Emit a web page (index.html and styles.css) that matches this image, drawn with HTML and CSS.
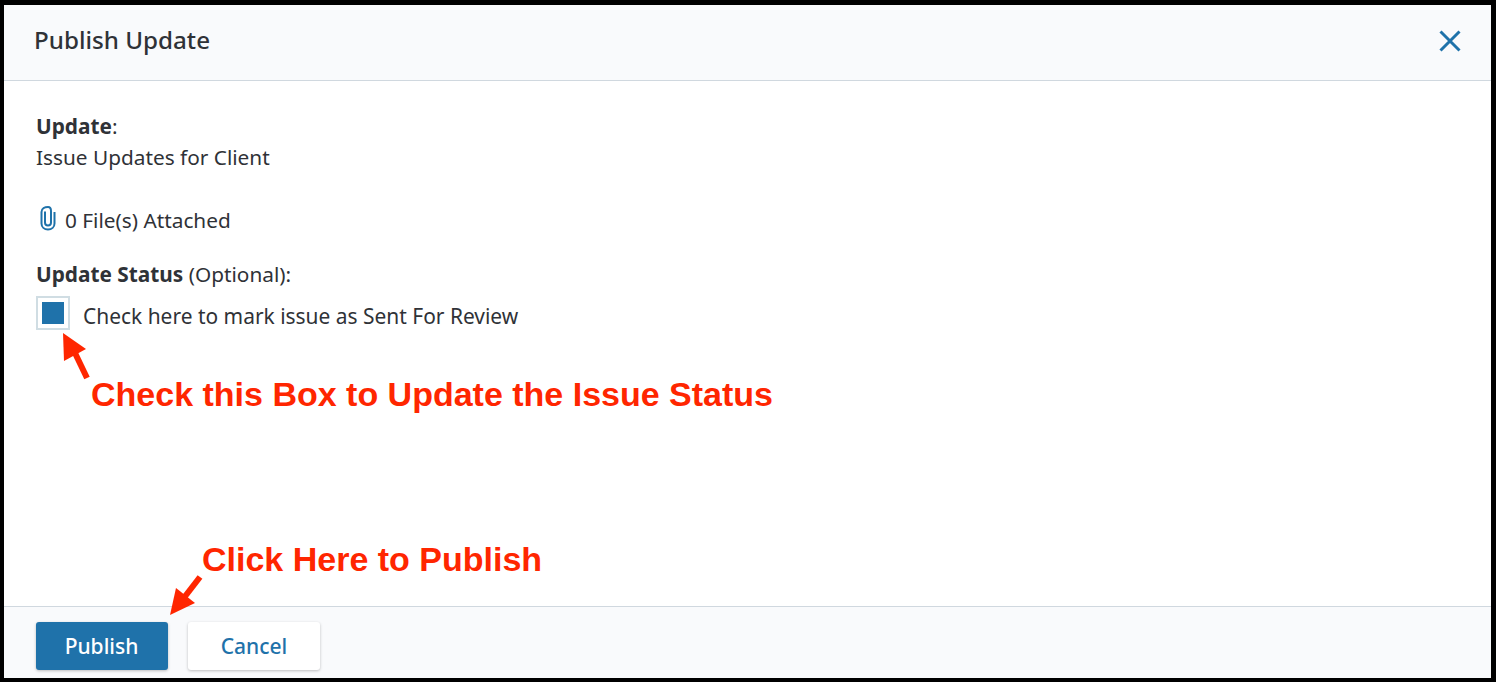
FILE: index.html
```html
<!DOCTYPE html>
<html lang="en">
<head>
<meta charset="utf-8">
<title>Publish Update</title>
<link rel="stylesheet" href="styles.css">
</head>
<body>
<div class="modal">
  <header class="modal-header">
    <h1 class="modal-title">Publish Update</h1>
    <svg class="close-icon" width="24" height="24" viewBox="0 0 24 24" aria-label="Close"><path d="M2.5 2.5L21.5 21.5M21.5 2.5L2.5 21.5"/></svg>
  </header>
  <main class="modal-body">
    <p class="label-line"><strong>Update</strong>:</p>
    <p class="value-line">Issue Updates for Client</p>
    <p class="files-line">
      <svg class="clip-icon" width="18" height="26" viewBox="0 0 18 26"><path d="M6 6.5V17.5C6 19.5 7.3 20.5 9 20.5C10.7 20.5 12 19.5 12 17.5V6C12 3.5 10.7 2 9 2C6 2 2.5 3.5 2.5 7V18.5C2.5 22 5.3 24.5 9 24.5C12.7 24.5 15.5 22 15.5 18.5V7"/></svg>
      <span>0 File(s) Attached</span>
    </p>
    <p class="status-line"><strong>Update Status</strong> (Optional):</p>
    <label class="check-row">
      <span class="checkbox"><span class="checkbox-fill"></span></span>
      <span class="check-text">Check here to mark issue as Sent For Review</span>
    </label>
  </main>
  <footer class="modal-footer">
    <button class="btn btn-primary" type="button">Publish</button>
    <button class="btn btn-secondary" type="button">Cancel</button>
  </footer>
  <svg class="arrow arrow-box" width="40" height="60" viewBox="0 0 40 60"><path d="M26 47L14 22" class="arrow-line"/><path d="M2 2L25 18L3 30Z" class="arrow-head"/></svg>
  <div class="note note-box">Check this Box to Update the Issue Status</div>
  <div class="note note-publish">Click Here to Publish</div>
  <svg class="arrow arrow-publish" width="50" height="50" viewBox="0 0 50 50"><path d="M32 3L15 25" class="arrow-line"/><path d="M2 41L8 14L27 29Z" class="arrow-head"/></svg>
</div>
</body>
</html>
```
FILE: styles.css
```css
* { box-sizing: border-box; }
html, body { margin: 0; height: 100%; }
body {
  background: #000;
  padding: 5px 5px 4px 4px;
  font-family: "Noto Sans", "Open Sans", sans-serif;
  color: #2f3237;
  font-size: 20.8px;
  overflow: hidden;
}
.modal {
  position: relative;
  height: 673px;
  background: #fff;
  display: flex;
  flex-direction: column;
}
.modal-header {
  height: 76px;
  flex: none;
  background: #f9fafc;
  border-bottom: 1px solid #d0d8df;
  display: flex;
  align-items: center;
  justify-content: space-between;
  padding: 0 29px 5px 30px;
}
.modal-title { margin: 0; font-size: 24.2px; font-weight: 500; line-height: 32px; }
.close-icon { fill: none; stroke: #1f72aa; stroke-width: 3; margin-top: 2px; }
.modal-body { flex: 1; padding: 30px 32px 0; }
.modal-body p { margin: 0; line-height: 31px; }
.files-line { display: flex; align-items: center; gap: 8px; margin-top: 32px !important; }
.clip-icon { fill: none; stroke: #1f72aa; stroke-width: 2; flex: none; margin-top: -6px; margin-left: 3px; }
.status-line { margin-top: 23px !important; }
.check-row { display: flex; align-items: center; gap: 13px; margin-top: 6px; }
.check-text { position: relative; top: 3px; font-size: 20.95px; }
.checkbox {
  width: 34px; height: 34px;
  border: 2px solid #d0dde3;
  display: flex; align-items: center; justify-content: center;
  background: #fff;
}
.checkbox-fill { width: 22px; height: 22px; background: #1f72aa; }
.modal-footer {
  height: 72px;
  flex: none;
  background: #f9fafc;
  border-top: 1px solid #d0d8df;
  display: flex;
  gap: 20px;
  padding: 15px 0 0 32px;
}
.btn {
  width: 132px; height: 48px;
  border-radius: 3px;
  font: 500 21px "Noto Sans", "Open Sans", sans-serif;
  border: 0;
  box-shadow: 0 1px 3px rgba(0,0,0,.25);
}
.btn-primary { background: #1f72aa; color: #fff; padding: 0 7px 0 6px; }
.btn-secondary { background: #fff; color: #1f72aa; }
.note {
  position: absolute;
  font-family: "Liberation Sans", Arial, sans-serif;
  font-weight: 700;
  color: #ff2600;
  font-size: 34px;
  line-height: 40px;
  white-space: nowrap;
}
.note-box { left: 87px; top: 369px; }
.note-publish { left: 198px; top: 534px; }
.arrow { position: absolute; }
.arrow-box { left: 57px; top: 326px; }
.arrow-publish { left: 164px; top: 569px; }
.arrow-line { stroke: #ff2600; stroke-width: 6; fill: none; }
.arrow-head { fill: #ff2600; }
```
